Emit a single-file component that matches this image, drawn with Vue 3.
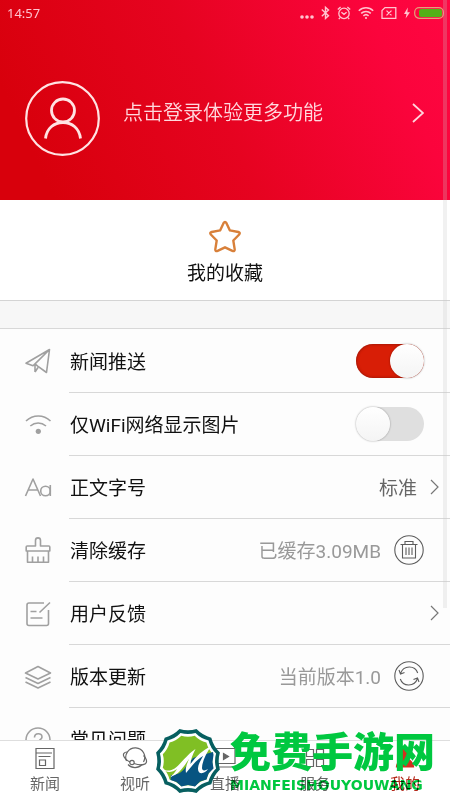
<script setup>
import { ref } from 'vue';

const push = ref(true);
const wifiOnly = ref(false);

const rows = [
  { icon: 'plane', label: '新闻推送', type: 'switch', model: push },
  { icon: 'wifi', label: '仅WiFi网络显示图片', type: 'switch', model: wifiOnly },
  { icon: 'font', label: '正文字号', value: '标准', type: 'arrow' },
  { icon: 'brush', label: '清除缓存', value: '已缓存3.09MB', type: 'trash' },
  { icon: 'note', label: '用户反馈', type: 'arrow' },
  { icon: 'layers', label: '版本更新', value: '当前版本1.0', type: 'refresh' },
  { icon: 'help', label: '常见问题', type: 'plain' }
];

const tabs = [
  { icon: 'news', label: '新闻' },
  { icon: 'planet', label: '视听' },
  { icon: 'live', label: '直播' },
  { icon: 'grid', label: '服务' },
  { icon: 'me', label: '我的' }
];

// twelve-sided badge outline, reused at three sizes
const badge = 'M42.5 1.1Q48.7 7.5 57.3 9.7 59.5 18.3 65.9 24.5 63.5 33 65.9 41.5 59.5 47.7 57.3 56.3 48.7 58.5 42.5 64.9 34 62.5 25.5 64.9 19.3 58.5 10.7 56.3 8.5 47.7 2.1 41.5 4.5 33 2.1 24.5 8.5 18.3 10.7 9.7 19.3 7.5 25.5 1.1 34 3.5 42.5 1.1z';

const active = ref('me');

function toggle(row) {
  row.model.value = !row.model.value;
}
</script>

<template>
  <div class="page">
    <header class="hero">
      <div class="status">
        <span class="time">14:57</span>
        <div class="status-icons">
          <svg width="14" height="16" viewBox="0 0 14 16" fill="#ffc4cf">
            <circle cx="2" cy="12" r="1.8" /><circle cx="7" cy="12" r="1.8" /><circle cx="12" cy="12" r="1.8" />
          </svg>
          <svg width="9" height="16" viewBox="0 0 9 16" fill="none" stroke="#ffc4cf" stroke-width="1.4">
            <path d="M0.8 4.5 7.5 10.8 4.5 13.4V2.4L7.5 5 0.8 11.2" />
          </svg>
          <svg width="14" height="16" viewBox="0 0 14 16" fill="none" stroke="#ffc4cf" stroke-width="1.3">
            <circle cx="7" cy="8.4" r="5.2" />
            <path d="M4.4 7.2 7 9.3l2.6-2.1M.8 4.6 3.6 2M13.2 4.6 10.4 2M3 12.6l-1.2 1.6M11 12.6l1.2 1.6" />
          </svg>
          <svg width="16" height="16" viewBox="0 0 16 16" fill="none" stroke="#ffc4cf" stroke-width="1.5">
            <path d="M.8 5.8c4-4 10.4-4 14.4 0M3.2 8.4c2.7-2.7 6.9-2.7 9.6 0M5.4 10.9c1.5-1.5 3.7-1.5 5.2 0" />
            <circle cx="8" cy="13" r="1.1" fill="#ffc4cf" stroke="none" />
          </svg>
          <svg width="16" height="16" viewBox="0 0 16 16" fill="none" stroke="#ffc4cf" stroke-width="1.3">
            <path d="M4 2.6h10.8v10.8H1V5.6zM5.5 5.6l5 4.8M10.5 5.6l-5 4.8" />
          </svg>
          <svg width="6" height="16" viewBox="0 0 6 16" fill="#ffc4cf">
            <path d="M3.8 2.6 0 9h2.5L1.6 13.6 6 7.3H3.4z" />
          </svg>
          <svg width="30" height="16" viewBox="0 0 30 16">
            <rect x=".7" y="2.7" width="28.6" height="10.6" rx="4.5" fill="none" stroke="#e4a079" stroke-width="1.2" />
            <rect x="5" y="4" width="23" height="8" rx="2.5" fill="#54b117" />
          </svg>
        </div>
      </div>
      <a href="#" class="login">
        <svg class="avatar" viewBox="0 0 76 76" fill="none" stroke="#ffe3e3" stroke-width="2.2">
          <circle cx="37.5" cy="37.5" r="36.3" />
          <circle cx="38" cy="29.5" r="11.5" stroke-width="2.8" />
          <path d="M20.5 57.5c1-10 8.500-16 17.500-16s16.500 6 17.500 16" stroke-width="2.8" />
        </svg>
        <span class="login-text">点击登录体验更多功能</span>
        <svg width="12" height="20" viewBox="0 0 12 20" fill="none" stroke="#ffd5dc" stroke-width="1.8">
          <path d="m1 1 10 9L1 19" />
        </svg>
      </a>
    </header>

    <a href="#" class="favorites">
      <svg width="34" height="34" viewBox="0 0 34 34" fill="none" stroke="#d8803a" stroke-width="2.4" stroke-linejoin="round">
        <path d="M15.5 3.2q1.500-2.500 3 0l3.400 7.200 8.400 1.600q2.400.7.900 2.500l-5.900 6 1.400 8.900q0 2.400-2.300 1.500L17 27.300l-7.400 3.600q-2.300.9-2.300-1.500l1.400-8.900-5.900-6q-1.500-1.800.9-2.500l8.400-1.600z" />
      </svg>
      <span>我的收藏</span>
    </a>

    <main class="list">
      <div v-for="row in rows" :key="row.icon" class="row">
        <svg class="row-icon" viewBox="0 0 28 28" fill="none" stroke="#a0a0a0" stroke-width="1.6" stroke-linejoin="round">
          <path v-if="row.icon === 'plane'" d="M25.5 1.500 2 15.200l7 2.500L25.500 1.500l-3 23-8.800-6.400L11 15.800M11 24v-8L25.500 1.500M11 24l3-4.500" />
          <template v-else-if="row.icon === 'wifi'">
            <path d="M2 10c7-6.700 17.500-6.700 24.500 0M6.300 15c4.700-4 11-4 15.700 0" />
            <circle cx="14.3" cy="20.3" r="2.6" fill="#a0a0a0" stroke="none" />
          </template>
          <template v-else-if="row.icon === 'font'">
            <path d="M1.500 22 9 5l7.500 17M4.500 16h9M26.300 11v11" />
            <circle cx="21.500" cy="17" r="4.800" />
          </template>
          <path v-else-if="row.icon === 'brush'" d="M11.500 9V3.500c0-3.500 5-3.500 5 0V9h8.300q1 0 1 1v4H2.200v-4q0-1 1-1zM3.500 14v11.200h21V14M8.500 19.500v5.500M14 19.500v5.500M19.500 19.500v5.500" />
          <path v-else-if="row.icon === 'note'" d="M20 3H5Q3 3 3 5v18.500q0 2 2 2h17.500q2 0 2-2V10M26 2.500 15.500 12.500M6.500 11.500h6M6.500 18h12" />
          <path v-else-if="row.icon === 'layers'" d="M14 3.500 26.500 10 14 16 1.500 10zM1.500 14.500 14 20.500l12.500-6M1.500 19 14 25l12.500-6" />
          <template v-else>
            <circle cx="14" cy="14" r="12" />
            <path d="M10.500 11.500c0-5 7.500-5 7.500-.5 0 2.500-3.700 3-3.700 6M14.300 19v2" />
          </template>
        </svg>
        <div class="row-body">
          <label v-if="row.type === 'switch'" class="label" :for="row.icon">{{ row.label }}</label>
          <span v-else class="label">{{ row.label }}</span>
          <span v-if="row.value" class="value" :class="{ dark: row.type === 'arrow' }">{{ row.value }}</span>
          <input
            v-if="row.type === 'switch'"
            :id="row.icon"
            class="switch"
            type="checkbox"
            :checked="row.model.value"
            @change="toggle(row)"
          >
          <button v-else-if="row.type !== 'plain'" class="action" :class="row.type" :aria-label="row.label">
            <svg v-if="row.type === 'arrow'" width="9" height="16" viewBox="0 0 9 16" fill="none" stroke="#777" stroke-width="1.2">
              <path d="m1 1 7 7-7 7" />
            </svg>
            <svg v-else width="30" height="30" viewBox="0 0 30 30" fill="none" stroke="#5c5c5c" stroke-width="1.1">
              <circle cx="15" cy="15" r="14.2" />
              <path v-if="row.type === 'trash'" d="M6.500 9.500h17M8.500 9.500v13.500h13V9.500M11 9.500V6.500h8v3M12 12.500v7.500M15 12.500v7.500M18 12.500v7.500" />
              <path v-else d="M6.500 12.500c3-8.500 14.500-8.500 17.200-.5M5 9l1.500 4 4-1.500M23.500 17.500c-3 8.500-14.500 8.500-17.200.5M25 21l-1.500-4-4 1.500" />
            </svg>
          </button>
        </div>
      </div>
    </main>

    <nav class="tabs">
      <button
        v-for="tab in tabs"
        :key="tab.icon"
        class="tab"
        :class="{ active: active === tab.icon }"
        @click="active = tab.icon"
      >
        <svg width="26" height="24" viewBox="0 0 26 24" fill="none" stroke="#666" stroke-width="1.2">
          <path v-if="tab.icon === 'news'" d="M4 2.500h18v20H4zM4 7h16M6.500 10.500h12M7.500 14h6v5.500h-6z" />
          <template v-else-if="tab.icon === 'planet'">
            <path d="M4.500 15A9.500 9.500 0 1 1 21.500 16M20 18.500A9.500 9.500 0 0 1 6 18.500" />
            <path d="M5 6C-1 6.500 1 12.500 8 16M12 17.500c8 3 14.500 1 12-4.500-.5-1.500-1.500-2.500-2.500-3.500" />
            <circle cx="10" cy="16.500" r="2.200" />
          </template>
          <template v-else-if="tab.icon === 'live'">
            <path d="M3 2.500h20v15H3zM3 21h20" />
            <path d="m11.500 7.500 5 3-5 3z" fill="#666" />
          </template>
          <path v-else-if="tab.icon === 'grid'" d="M4.500 3.500h7v7h-7zM14.500 3.500h7v7h-7zM4.500 13.500h7v7h-7zM14.500 13.500h7v7h-7z" />
          <path v-else fill="#d3301f" stroke="none" d="M13 2a5.800 5.800 0 0 1 3 10.500c3.700 1.500 6 5 6.200 9H3.800c.2-4 2.500-7.500 6.200-9A5.800 5.800 0 0 1 13 2z" />
        </svg>
        <span>{{ tab.label }}</span>
      </button>
    </nav>

    <div class="scrollbar"></div>

    <div class="brand">
      <svg width="68" height="66" viewBox="0 0 68 66">
        <path :d="badge" fill="#075f60" />
        <path :d="badge" fill="#fff" transform="translate(34 33) scale(.88) translate(-34 -33)" />
        <path :d="badge" fill="#80bf24" transform="translate(34 33) scale(.79) translate(-34 -33)" />
        <path d="M17 47c6 0 10-2 14-7l8-10 9-3 11-3 .5 3-1 7 1 6.500-5 5-2 6-6.500 2-5 5-7-1.500-6.500 1.500-5-4.500-6-2z" fill="#075481" />
        <path d="M8.500 41c7 4 13 0 18-6 6-6 9-10 15-14-3 6-5 11-5 15C42 28 49 22 57 18c-5 8-9 16-9 22 0 3 3 3 6 1-3 5-10 6-10 0 0-5 3-9 5-13-7 4-11 10-17 17-1-5 1-9 3-14-5 7-10 16-19 18 3-2 5-5 7-8-5 4-11 4-14.500 0z" fill="#fff" />
      </svg>
      <div class="brand-text">
        <strong>免费手游网</strong>
        <span>MIANFEISHOUYOUWANG</span>
      </div>
    </div>
  </div>
</template>

<style>
body {
  margin: 0;
}
</style>

<style scoped>
.page {
  position: relative;
  display: flex;
  flex-direction: column;
  height: 100vh;
  overflow: hidden;
  background: #fdfdfd;
  color: #111;
  font-family: Roboto, "Noto Sans CJK SC", sans-serif;
}

a {
  color: inherit;
  text-decoration: none;
}

button {
  padding: 0;
  border: none;
  background: none;
  font-family: inherit;
  cursor: pointer;
}

svg {
  display: block;
  flex-shrink: 0;
}

.hero {
  flex-shrink: 0;
  height: 200px;
  background: linear-gradient(65deg, #d8000c 10%, #e60320 48%, #fb043c 84%, #ff0642);
}

.status {
  display: flex;
  align-items: center;
  justify-content: space-between;
  height: 26px;
  padding: 0 6px 0 7px;
}

.time {
  color: #ffc4cf;
  font-family: "Noto Sans", sans-serif;
  font-size: 13px;
}

.status-icons {
  display: flex;
  align-items: center;
  gap: 7px;
}

.status-icons svg:last-child {
  margin-left: -3px;
}

.login {
  display: flex;
  align-items: center;
  padding: 55px 26px 0 25px;
}

.avatar {
  width: 76px;
  height: 76px;
}

.login svg:last-child {
  margin-bottom: 12px;
}

.login-text {
  flex: 1;
  margin-left: 22px;
  padding-bottom: 16px;
  color: #ffd9de;
  font-size: 20px;
  font-weight: 350;
}

.favorites {
  display: flex;
  flex-direction: column;
  align-items: center;
  flex-shrink: 0;
  gap: 6px;
  height: 80px;
  padding-top: 20px;
  background: #fff;
  font-size: 19px;
  line-height: 28px;
}

.list {
  flex: 1;
  min-height: 0;
  overflow: hidden;
  border-top: 1px solid #d4d4d4;
}

.list::before {
  display: block;
  height: 27px;
  margin-bottom: 1px;
  border-bottom: 1px solid #d8d8d8;
  background: #f7f7f7;
  content: "";
}

.row {
  display: flex;
  align-items: center;
  padding-left: 24px;
}

.row-icon {
  width: 28px;
  height: 28px;
  margin-right: 17px;
}

.row-body {
  display: flex;
  align-items: center;
  flex: 1;
  box-sizing: border-box;
  height: 63px;
  padding: 0 26px 0 1px;
  border-bottom: 1px solid #d8d8d8;
  font-size: 19px;
}

.label,
.value {
  padding-bottom: 2px;
}

.label {
  flex: 1;
}

.value {
  color: #999;
}

.value.dark {
  color: #666;
}

.action {
  margin-left: 13px;
}

.action.arrow {
  margin-right: -15px;
}

.switch {
  display: flex;
  width: 68px;
  height: 34px;
  margin: 0;
  border-radius: 17px;
  appearance: none;
  background: #dfdfdf;
  cursor: pointer;
}

.switch::before {
  width: 34px;
  height: 34px;
  border-radius: 50%;
  background: linear-gradient(#fff, #f4f4f4);
  box-shadow: 0 0 2px rgba(0, 0, 0, 0.4);
  content: "";
}

.switch:checked {
  justify-content: flex-end;
  background: #d81e06;
  box-shadow: inset 0 0 3px #7c1206;
}

.tabs {
  display: flex;
  flex-shrink: 0;
  box-sizing: border-box;
  height: 60px;
  border-top: 1px solid #dedede;
  background: #fff;
}

.tab {
  display: flex;
  flex: 1;
  flex-direction: column;
  align-items: center;
  gap: 2px;
  padding-top: 5px;
  color: #666;
  font-size: 15px;
  line-height: 24px;
}

.tab.active {
  color: #b52a1c;
}

.scrollbar {
  position: absolute;
  top: 0;
  right: 3px;
  width: 4px;
  height: 76%;
  background: rgba(200, 200, 200, 0.25);
}

.brand {
  position: absolute;
  bottom: 6px;
  left: 50%;
  display: flex;
  align-items: center;
  gap: 8px;
  margin-left: -71px;
  pointer-events: none;
}

.brand-text {
  display: flex;
  flex-direction: column;
  color: #00c840;
  white-space: nowrap;
}

.brand-text strong {
  font-size: 41px;
  font-weight: 900;
  line-height: 48px;
}

.brand-text span {
  font-family: "DejaVu Sans", sans-serif;
  font-size: 14px;
  font-weight: bold;
  line-height: 16px;
  mix-blend-mode: multiply;
}
</style>
